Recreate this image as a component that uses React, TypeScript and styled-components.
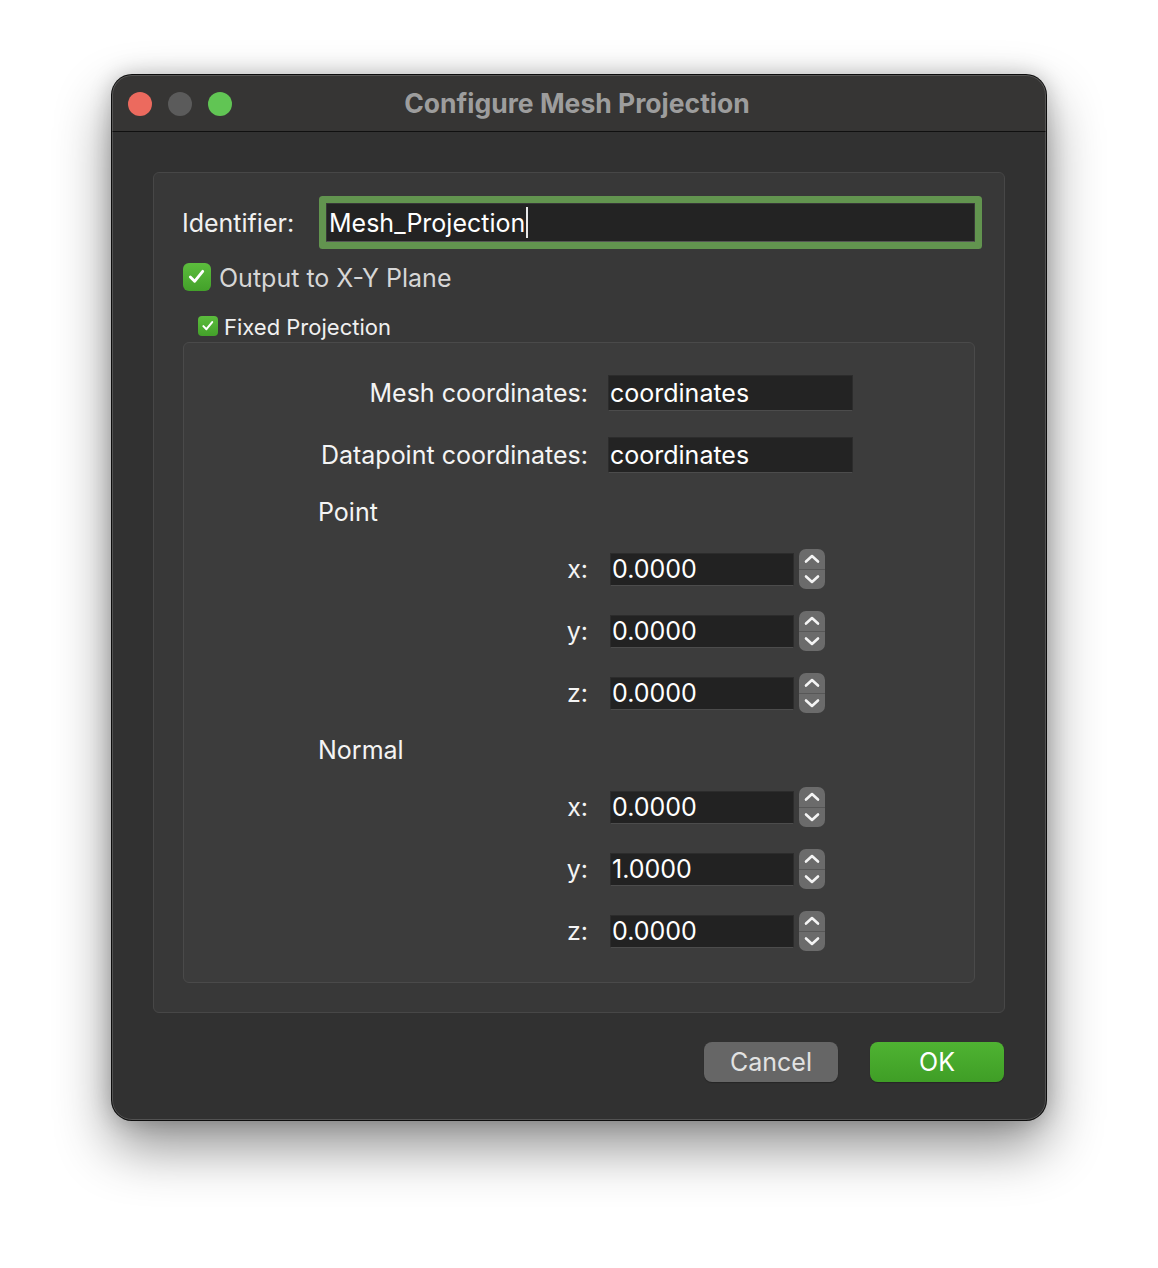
import React from "react";
import styled, { createGlobalStyle } from "styled-components";

const Global = createGlobalStyle`
  html, body { margin: 0; padding: 0; background: #ffffff; }
  body { font-family: Inter, "Liberation Sans", Arial, sans-serif; -webkit-font-smoothing: antialiased; }
  * { box-sizing: border-box; }
`;

const Page = styled.div`
  width: 1158px;
  height: 1268px;
  padding: 75px 0 0 112px;
  background: #ffffff;
`;

const Window = styled.div`
  position: relative;
  width: 934px;
  height: 1045px;
  border-radius: 20px;
  background: #313131;
  overflow: hidden;
  display: flex;
  flex-direction: column;
  box-shadow: 0 0 0 1px #0d0d0d, 0 26px 55px rgba(0, 0, 0, 0.45), 0 0 22px rgba(0, 0, 0, 0.22);
  &::after {
    content: "";
    position: absolute;
    inset: 0;
    border-radius: 20px;
    border: 1px solid rgba(255, 255, 255, 0.16);
    pointer-events: none;
  }
`;

const TitleBar = styled.div`
  height: 57px;
  flex: none;
  background: #363534;
  border-bottom: 1px solid #101010;
  display: grid;
  grid-template-columns: 1fr auto 1fr;
  align-items: center;
  padding: 0 16px;
`;

const Lights = styled.div`
  display: flex;
  gap: 16px;
  align-items: center;
  margin-top: 1px;
`;

const Light = styled.span<{ $color: string }>`
  width: 24px;
  height: 24px;
  border-radius: 50%;
  background: ${(p) => p.$color};
`;

const Title = styled.div`
  font-family: Inter, "Liberation Sans", Arial, sans-serif;
  font-weight: 700;
  font-size: 26.5px;
  color: #9d9d9d;
  margin-left: -4px;
  margin-top: 0px;
`;

const Content = styled.div`
  flex: 1;
  display: flex;
  flex-direction: column;
  padding: 40px 41px 38px 41px;
  gap: 29px;
`;

const GroupBox = styled.div`
  flex: 1;
  border: 1px solid #474747;
  border-radius: 6px;
  background: #383838;
  padding: 22px 29px 29px 29px;
  display: flex;
  flex-direction: column;
`;

const IdentifierRow = styled.div`
  display: flex;
  align-items: center;
  height: 54px;
`;

const Label = styled.span<{ $size?: number; $color?: string; $shift?: number }>`
  font-size: ${(p) => p.$size ?? 25}px;
  line-height: 1;
  color: ${(p) => p.$color ?? "#f0f0f0"};
  white-space: nowrap;
  margin-top: ${(p) => p.$shift ?? 0}px;
`;

const IdLabel = styled(Label)`
  width: 144px;
  flex: none;
  margin-left: -1px;
  margin-top: 2px;
`;

const FocusedField = styled.div`
  flex: 1;
  height: 39px;
  background: #232323;
  border: 1px solid #383838;
  border-bottom-color: #555555;
  border-radius: 1px;
  box-shadow: 0 0 0 7px #62944f;
  display: flex;
  align-items: center;
  padding-left: 2px;
  padding-top: 2px;
  font-size: 25px;
  color: #ffffff;
`;

const Caret = styled.span`
  display: inline-block;
  width: 1.5px;
  height: 31px;
  background: #e8e8e8;
  margin-left: 1px;
  margin-top: -2px;
`;

const CheckRow = styled.div<{ $indent?: number; $gap: number; $top: number; $height: number }>`
  display: flex;
  align-items: center;
  height: ${(p) => p.$height}px;
  gap: ${(p) => p.$gap}px;
  margin-left: ${(p) => p.$indent ?? 0}px;
  margin-top: ${(p) => p.$top}px;
`;

const CheckBox = styled.span<{ $size: number }>`
  width: ${(p) => p.$size}px;
  height: ${(p) => p.$size}px;
  border-radius: ${(p) => Math.round(p.$size / 5)}px;
  background: linear-gradient(#5cbd3d, #43a12a);
  display: flex;
  align-items: center;
  justify-content: center;
  flex: none;
`;

const InnerBox = styled.div`
  flex: 1;
  margin-top: 6px;
  border: 1px solid #4a4a4a;
  border-radius: 6px;
  background: #3c3c3c;
  padding: 30px 0 30px 134px;
  display: grid;
  grid-template-columns: 270px auto;
  column-gap: 20px;
  row-gap: 22px;
  align-content: start;
  align-items: center;
`;

const FormLabel = styled.span`
  justify-self: end;
  font-size: 25px;
  color: #f4f4f4;
  white-space: nowrap;
  line-height: 40px;
`;

const SectionTitle = styled.span`
  grid-column: 1 / span 2;
  font-size: 25px;
  color: #f4f4f4;
  line-height: 30px;
`;

const TextField = styled.div`
  width: 245px;
  height: 36px;
  background: #232323;
  border: 1px solid #2c2c2c;
  border-bottom-color: #4c4c4c;
  display: flex;
  align-items: center;
  padding-left: 1px;
  font-size: 25px;
  color: #ffffff;
`;

const SpinBox = styled.div`
  display: flex;
  align-items: center;
  gap: 5px;
  padding-left: 2px;
`;

const NumberField = styled.div`
  width: 184px;
  height: 33px;
  background: #222222;
  border: 1px solid #2c2c2c;
  border-bottom-color: #4c4c4c;
  display: flex;
  align-items: center;
  padding-left: 1px;
  font-size: 25px;
  color: #ffffff;
`;

const Stepper = styled.div`
  width: 26px;
  height: 40px;
  border-radius: 7px;
  background: #6b6b6b;
  display: flex;
  flex-direction: column;
  overflow: hidden;
`;

const StepHalf = styled.div<{ $top?: boolean }>`
  flex: 1;
  display: flex;
  align-items: center;
  justify-content: center;
  border-bottom: ${(p) => (p.$top ? "1px solid #575757" : "none")};
`;

const ButtonRow = styled.div`
  display: flex;
  justify-content: flex-end;
  gap: 32px;
  padding-right: 1px;
`;

const Button = styled.button<{ $primary?: boolean }>`
  width: 134px;
  height: 40px;
  border: none;
  border-radius: 8px;
  font-family: Inter, "Liberation Sans", Arial, sans-serif;
  font-size: 25px;
  color: ${(p) => (p.$primary ? "#ffffff" : "#e2e2e2")};
  background: ${(p) => (p.$primary ? "linear-gradient(#4fb332, #3f9e26)" : "#666666")};
  box-shadow: 0 1px 1px rgba(0, 0, 0, 0.25);
  padding: 0;
`;

const Check = ({ size }: { size: number }) => (
  <svg width={size * 0.68} height={size * 0.68} viewBox="0 0 20 20">
    <path d="M3.5 10.5 L8 15 L16.5 4.5" fill="none" stroke="#ffffff" strokeWidth="3" strokeLinecap="round" strokeLinejoin="round" />
  </svg>
);

const Chevron = ({ up }: { up?: boolean }) => (
  <svg width="18" height="12" viewBox="0 0 18 12">
    <path d={up ? "M3 8.5 L9 3 L15 8.5" : "M3 3.5 L9 9 L15 3.5"} fill="none" stroke="#f4f4f4" strokeWidth="2.6" strokeLinecap="round" strokeLinejoin="round" />
  </svg>
);

const Spin = ({ label, value }: { label: string; value: string }) => (
  <>
    <FormLabel>{label}</FormLabel>
    <SpinBox>
      <NumberField>{value}</NumberField>
      <Stepper>
        <StepHalf $top>
          <Chevron up />
        </StepHalf>
        <StepHalf>
          <Chevron />
        </StepHalf>
      </Stepper>
    </SpinBox>
  </>
);

export default function App() {
  return (
    <Page>
      <Global />
      <Window>
        <TitleBar>
          <Lights>
            <Light $color="#ec6a5e" />
            <Light $color="#5b5b5b" />
            <Light $color="#61c554" />
          </Lights>
          <Title>Configure Mesh Projection</Title>
          <span />
        </TitleBar>
        <Content>
          <GroupBox>
            <IdentifierRow>
              <IdLabel>Identifier:</IdLabel>
              <FocusedField>
                Mesh_Projection
                <Caret />
              </FocusedField>
            </IdentifierRow>
            <CheckRow $gap={8} $top={14} $height={28}>
              <CheckBox $size={28}>
                <Check size={28} />
              </CheckBox>
              <Label $color="#d6d6d6" $shift={3}>Output to X-Y Plane</Label>
            </CheckRow>
            <CheckRow $gap={6} $top={25} $height={20} $indent={15}>
              <CheckBox $size={20}>
                <Check size={20} />
              </CheckBox>
              <Label $size={22} $shift={2}>Fixed Projection</Label>
            </CheckRow>
            <InnerBox>
              <FormLabel>Mesh coordinates:</FormLabel>
              <TextField>coordinates</TextField>
              <FormLabel>Datapoint coordinates:</FormLabel>
              <TextField>coordinates</TextField>
              <SectionTitle>Point</SectionTitle>
              <Spin label="x:" value="0.0000" />
              <Spin label="y:" value="0.0000" />
              <Spin label="z:" value="0.0000" />
              <SectionTitle>Normal</SectionTitle>
              <Spin label="x:" value="0.0000" />
              <Spin label="y:" value="1.0000" />
              <Spin label="z:" value="0.0000" />
            </InnerBox>
          </GroupBox>
          <ButtonRow>
            <Button>Cancel</Button>
            <Button $primary>OK</Button>
          </ButtonRow>
        </Content>
      </Window>
    </Page>
  );
}
